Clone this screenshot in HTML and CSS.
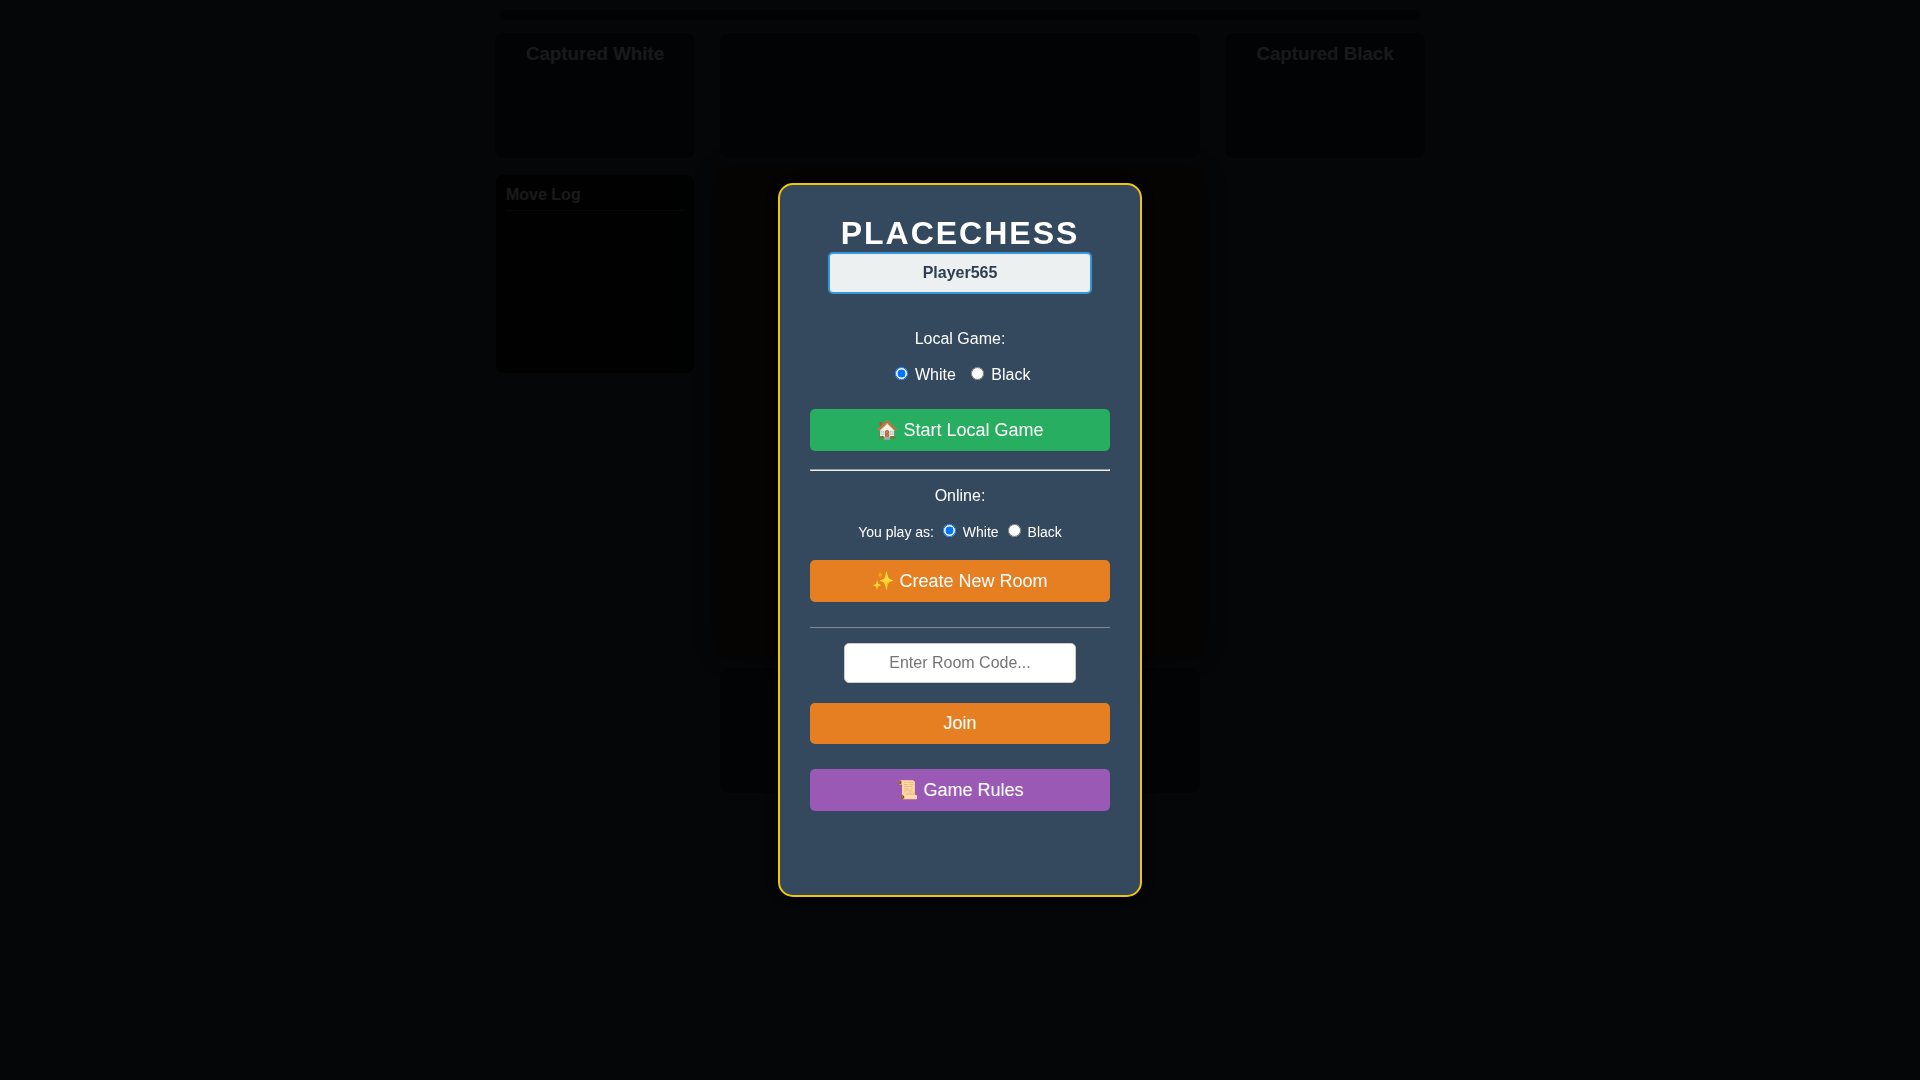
FILE: index.html
```html
<!DOCTYPE html>
<html lang="en">
<head>
<meta charset="UTF-8">
<meta name="viewport" content="width=device-width, initial-scale=1">
<title>PlaceChess</title>
<link rel="stylesheet" href="styles.css">
</head>
<body>
<div class="game">
  <div class="status-bar"></div>
  <div class="columns">
    <aside class="side">
      <section class="captured"><h3>Captured White</h3></section>
      <section class="move-log"><h4>Move Log</h4></section>
    </aside>
    <main class="center">
      <div class="hand"></div>
      <div class="board"></div>
      <div class="hand"></div>
    </main>
    <aside class="side">
      <section class="captured"><h3>Captured Black</h3></section>
    </aside>
  </div>
</div>

<div class="overlay">
  <div class="menu" role="dialog" aria-labelledby="menu-title">
    <h1 id="menu-title">PlaceChess</h1>
    <input class="player-name" type="text" value="Player565" aria-label="Player name">

    <p class="caption">Local Game:</p>
    <div class="choices local">
      <label><input type="radio" name="local-color" checked> White</label>
      <label><input type="radio" name="local-color"> Black</label>
    </div>
    <button class="btn green" type="button">🏠 Start Local Game</button>

    <hr class="divider">

    <p class="caption">Online:</p>
    <div class="choices online">
      <span>You play as:</span>
      <label><input type="radio" name="online-color" checked> White</label>
      <label><input type="radio" name="online-color"> Black</label>
    </div>
    <button class="btn orange" type="button">✨ Create New Room</button>

    <div class="join">
      <input class="room-code" type="text" placeholder="Enter Room Code..." aria-label="Room code">
      <button class="btn orange" type="button">Join</button>
    </div>

    <button class="btn purple" type="button">📜 Game Rules</button>
  </div>
</div>
</body>
</html>
```

FILE: styles.css
```css
* {
  box-sizing: border-box;
}

body {
  margin: 0;
  min-height: 100vh;
  background: #2c3e50;
  color: #fff;
  font-family: "Liberation Sans", Arial, sans-serif;
  font-size: 16px;
}

h1, h3, h4, p {
  margin: 0;
}

.game {
  max-width: 930px;
  margin: 0 auto;
  padding-top: 10px;
}

.status-bar {
  height: 10px;
  margin: 0 5px 13px;
  border-radius: 5px;
  background: rgba(0, 0, 0, 0.4);
}

.columns {
  display: grid;
  grid-template-columns: 200px minmax(0, 1fr) 200px;
  gap: 25px;
  align-items: start;
}

.side {
  display: flex;
  flex-direction: column;
  gap: 16px;
}

.captured,
.hand {
  border-radius: 8px;
  background: rgba(0, 0, 0, 0.4);
}

.captured {
  min-height: 125px;
  padding: 10px;
  text-align: center;
}

.captured h3 {
  line-height: 22px;
}

.move-log {
  min-height: 200px;
  padding: 10px;
  border: 1px solid #444;
  border-radius: 8px;
  background: #0a0d14;
}

.move-log h4 {
  padding-bottom: 5px;
  border-bottom: 1px solid #555;
  line-height: 20px;
}

.center {
  display: flex;
  flex-direction: column;
}

.hand {
  height: 125px;
}

.board {
  aspect-ratio: 1;
  margin: 10px -5px;
  background: #3a2a14;
  box-shadow: 0 0 30px rgba(0, 0, 0, 0.5);
}

.overlay {
  position: fixed;
  inset: 0;
  display: flex;
  align-items: center;
  justify-content: center;
  overflow: auto;
  background: rgba(0, 0, 0, 0.9);
}

.menu {
  display: flex;
  flex-direction: column;
  align-items: center;
  width: 364px;
  max-width: 100%;
  padding: 30px 30px 84px;
  border: 2px solid #f1c40f;
  border-radius: 15px;
  background: #34495e;
  box-shadow: 0 0 20px #000;
}

.menu h1 {
  font-size: 32px;
  line-height: 37px;
  letter-spacing: 2px;
  text-transform: uppercase;
}

.player-name,
.room-code {
  padding: 10px;
  border-radius: 5px;
  font-family: inherit;
  font-size: 16px;
  line-height: 18px;
  text-align: center;
}

.player-name {
  width: 264px;
  margin-bottom: 36px;
  border: 2px solid #3498db;
  background: #ecf0f1;
  color: #2c3e50;
  font-weight: bold;
}

.room-code {
  width: 232px;
  height: 40px;
  border: 1px solid #ccc;
  background: #fff;
  color: #000;
}

.caption {
  margin-bottom: 16px;
  line-height: 18px;
}

.choices {
  display: flex;
  align-items: baseline;
  justify-content: center;
  line-height: 18px;
}

.choices input {
  width: 13px;
  height: 13px;
  margin: 3px 3px 0 5px;
}

.local {
  gap: 10px;
  margin-bottom: 25px;
}

.online {
  gap: 4px;
  margin-bottom: 19px;
  font-size: 14px;
}

.btn {
  width: 100%;
  padding: 10px;
  border: 0;
  border-radius: 5px;
  color: #fff;
  font-family: inherit;
  font-size: 18px;
  line-height: 22px;
  cursor: pointer;
}

.green {
  background: #27ae60;
}

.orange {
  background: #e67e22;
}

.purple {
  background: #9b59b6;
}

.divider {
  width: 100%;
  height: 2px;
  margin: 18px 0 16px;
  border: 1px inset #eee;
}

.join {
  display: flex;
  flex-direction: column;
  align-items: center;
  gap: 20px;
  width: 100%;
  margin: 25px 0;
  padding-top: 15px;
  border-top: 1px solid #7f8c8d;
}

.join .btn {
  line-height: 21px;
}
```
